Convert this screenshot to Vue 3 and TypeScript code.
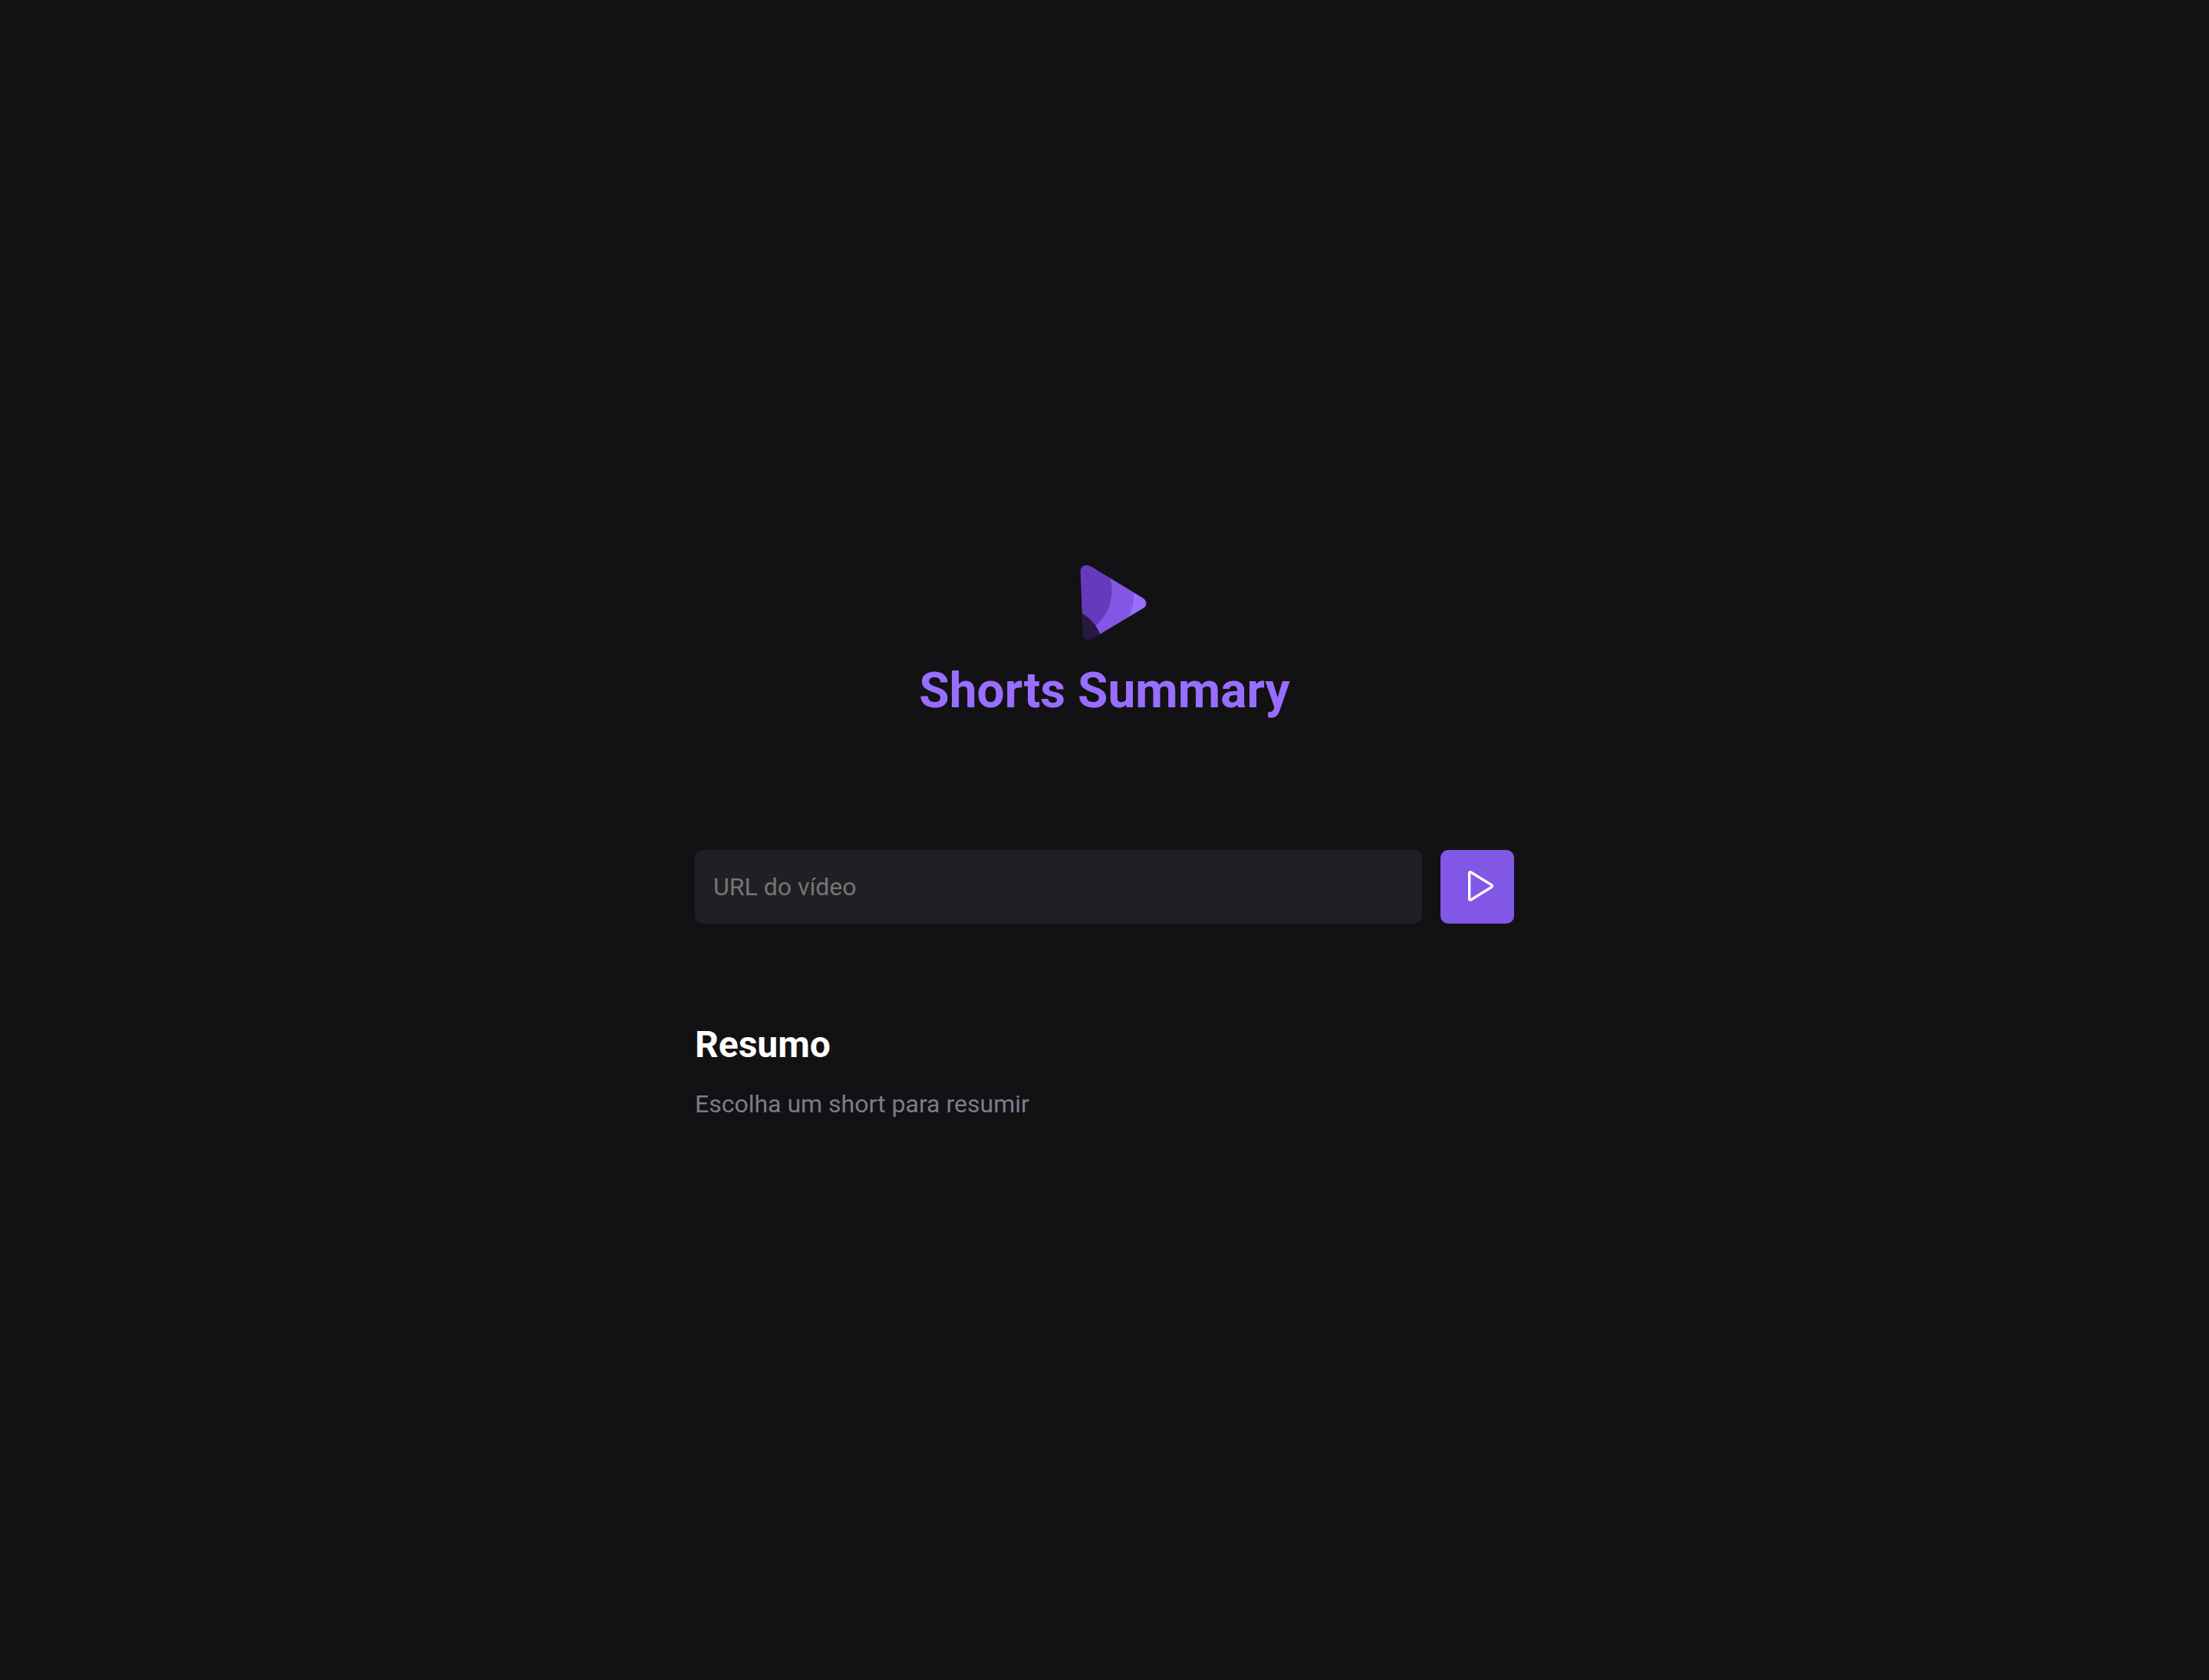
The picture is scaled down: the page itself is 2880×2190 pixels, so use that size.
<script setup lang="ts">
import { ref } from 'vue'

const url = ref('')
const summary = ref('Escolha um short para resumir')
</script>

<template>
  <main class="page">
    <div class="content">
      <header class="header">
        <svg class="logo" viewBox="-42 33 384 321" aria-hidden="true">
          <defs>
            <mask id="logo-shape" maskUnits="userSpaceOnUse" x="-42" y="33" width="384" height="321">
              <path fill="#fff" d="M56 76C55 60 66 50 80 50Q89 50 97 55L301 179Q313 188 313 200Q313 211 301 219L104 337Q96 342 88 342C75 342 65 332 65 318Z" />
            </mask>
          </defs>
          <g mask="url(#logo-shape)">
            <rect x="40" y="40" width="290" height="310" fill="#996dff" />
            <path d="M40 40H240L264 157Q268 210 244 253L220 350H40Z" fill="#8257e5" />
            <path d="M40 40H150L173 101C188 169 172 236 116 286L60 350H40Z" fill="#633bbc" />
            <path d="M40 227L61 238C94 257 119 286 133 320L140 350H40Z" fill="#271a45" />
          </g>
        </svg>
        <h1 class="title">Shorts Summary</h1>
      </header>

      <form class="form" @submit.prevent>
        <input v-model="url" class="field" type="text" placeholder="URL do vídeo" aria-label="URL do vídeo" />
        <button class="submit" type="submit" aria-label="Resumir">
          <svg class="play" viewBox="132 102 192 192" aria-hidden="true">
            <path d="M197 145V245Q197 252 203 249L283 200Q290 195 283 190L203 141Q197 138 197 145Z" />
          </svg>
        </button>
      </form>

      <section>
        <h2 class="subtitle">Resumo</h2>
        <p class="summary">{{ summary }}</p>
      </section>
    </div>
  </main>
</template>

<style>
body {
  margin: 0;
  background: #121214;
}
</style>

<style scoped>
.page {
  display: flex;
  align-items: center;
  justify-content: center;
  box-sizing: border-box;
  min-height: 100vh;
  padding: 0 24px;
  color: #fff;
  font-family: Roboto, sans-serif;
}

.content {
  width: 100%;
  max-width: 1068px;
}

.header {
  display: flex;
  flex-direction: column;
  align-items: center;
  gap: 24px;
  margin-bottom: 169px;
}

.logo {
  width: 128px;
  height: 107px;
}

.title {
  margin: 0;
  color: #996dff;
  font-size: 64px;
  font-weight: 700;
  line-height: 77px;
}

.form {
  display: flex;
  gap: 24px;
  margin-bottom: 129px;
}

.field {
  box-sizing: border-box;
  flex: 1;
  min-width: 0;
  height: 96px;
  padding: 0 24px;
  border: 0;
  border-radius: 10px;
  background: #202024;
  color: #fff;
  font: 32px Roboto, sans-serif;
}

.field::placeholder {
  color: #757575;
}

.submit {
  display: flex;
  align-items: center;
  justify-content: center;
  width: 96px;
  height: 96px;
  padding: 0;
  border: 0;
  border-radius: 10px;
  background: #8257e5;
  cursor: pointer;
}

.play {
  width: 64px;
  height: 64px;
  fill: none;
  stroke: #fff;
  stroke-width: 10;
  stroke-linejoin: round;
}

.subtitle {
  margin: 0 0 29px;
  font-size: 48px;
  font-weight: 700;
  line-height: 57px;
}

.summary {
  margin: 0;
  color: #7c7c8a;
  font-size: 32px;
  line-height: 40px;
}
</style>
